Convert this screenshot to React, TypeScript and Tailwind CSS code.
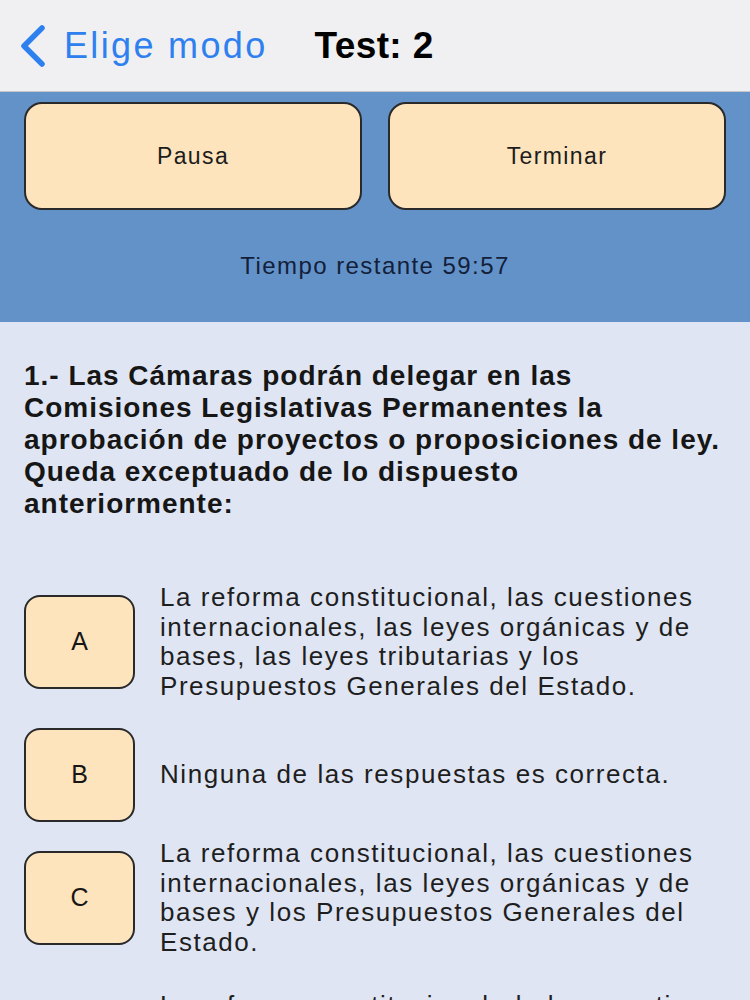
import React from "react";

type Option = {
  letter: string;
  lines: string[];
  mt: string;
};

const question = [
  "1.- Las Cámaras podrán delegar en las",
  "Comisiones Legislativas Permanentes la",
  "aprobación de proyectos o proposiciones de ley.",
  "Queda exceptuado de lo dispuesto",
  "anteriormente:",
];

const options: Option[] = [
  {
    letter: "A",
    mt: "mt-[63px]",
    lines: [
      "La reforma constitucional, las cuestiones",
      "internacionales, las leyes orgánicas y de",
      "bases, las leyes tributarias y los",
      "Presupuestos Generales del Estado.",
    ],
  },
  {
    letter: "B",
    mt: "mt-[27px]",
    lines: ["Ninguna de las respuestas es correcta."],
  },
  {
    letter: "C",
    mt: "mt-[17px]",
    lines: [
      "La reforma constitucional, las cuestiones",
      "internacionales, las leyes orgánicas y de",
      "bases y los Presupuestos Generales del",
      "Estado.",
    ],
  },
  {
    letter: "D",
    mt: "mt-[34px]",
    lines: [
      "La reforma constitucional, de las cuestiones",
      "internacionales, las leyes orgánicas y de",
      "bases y las leyes tributarias del",
      "Estado.",
    ],
  },
];

function BackChevron() {
  return (
    <svg width="28" height="42" viewBox="0 0 28 42" fill="none">
      <path
        d="M23 3 L5 21 L23 39"
        stroke="#2f80ef"
        strokeWidth="5.5"
        strokeLinecap="round"
        strokeLinejoin="round"
      />
    </svg>
  );
}

export default function App() {
  return (
    <div className="h-[1000px] w-[750px] overflow-hidden bg-[#dfe5f2] font-['Liberation_Sans',Arial,sans-serif] text-[#161616]">
      {/* nav bar */}
      <div className="flex h-[92px] items-center border-b border-[#c4c6cc] bg-[#f0f0f3]">
        <div className="ml-[19px] flex items-center">
          <BackChevron />
        </div>
        <span className="ml-[17px] text-[36px] tracking-[0.065em] text-[#2f80ef]">
          Elige modo
        </span>
        <span className="ml-[47px] text-[37px] font-bold tracking-[0.01em] text-black">
          Test: 2
        </span>
      </div>

      {/* timer panel */}
      <div className="flex h-[230px] flex-col bg-[#6392c8] px-[24px] pt-[10px]">
        <div className="flex gap-[26px]">
          <button className="flex h-[108px] flex-1 items-center justify-center rounded-[18px] border-2 border-[#2a2a2a] bg-[#fde4bd] text-[23px] tracking-[0.06em] text-[#1c1c1c]">
            Pausa
          </button>
          <button className="flex h-[108px] flex-1 items-center justify-center rounded-[18px] border-2 border-[#2a2a2a] bg-[#fde4bd] text-[23px] tracking-[0.06em] text-[#1c1c1c]">
            Terminar
          </button>
        </div>
        <p className="mt-[42px] text-center text-[24px] leading-[28px] tracking-[0.06em] text-[#13203a]">
          Tiempo restante 59:57
        </p>
      </div>

      {/* question */}
      <div className="px-[24px] pt-[38px]">
        <p className="whitespace-nowrap text-[28px] font-bold leading-[32px] tracking-[0.035em]">
          {question.map((l, i) => (
            <React.Fragment key={i}>
              {l}
              {i < question.length - 1 && <br />}
            </React.Fragment>
          ))}
        </p>

        {options.map((o) => (
          <div key={o.letter} className={`flex items-center gap-[25px] ${o.mt}`}>
            <div className="flex h-[94px] w-[111px] shrink-0 items-center justify-center rounded-[16px] border-2 border-[#2a2a2a] bg-[#fde4bd] text-[25px]">
              {o.letter}
            </div>
            <p className="whitespace-nowrap text-[26px] leading-[29.5px] tracking-[0.06em] text-[#1e1e1e]">
              {o.lines.map((l, i) => (
                <React.Fragment key={i}>
                  {l}
                  {i < o.lines.length - 1 && <br />}
                </React.Fragment>
              ))}
            </p>
          </div>
        ))}
      </div>
    </div>
  );
}
